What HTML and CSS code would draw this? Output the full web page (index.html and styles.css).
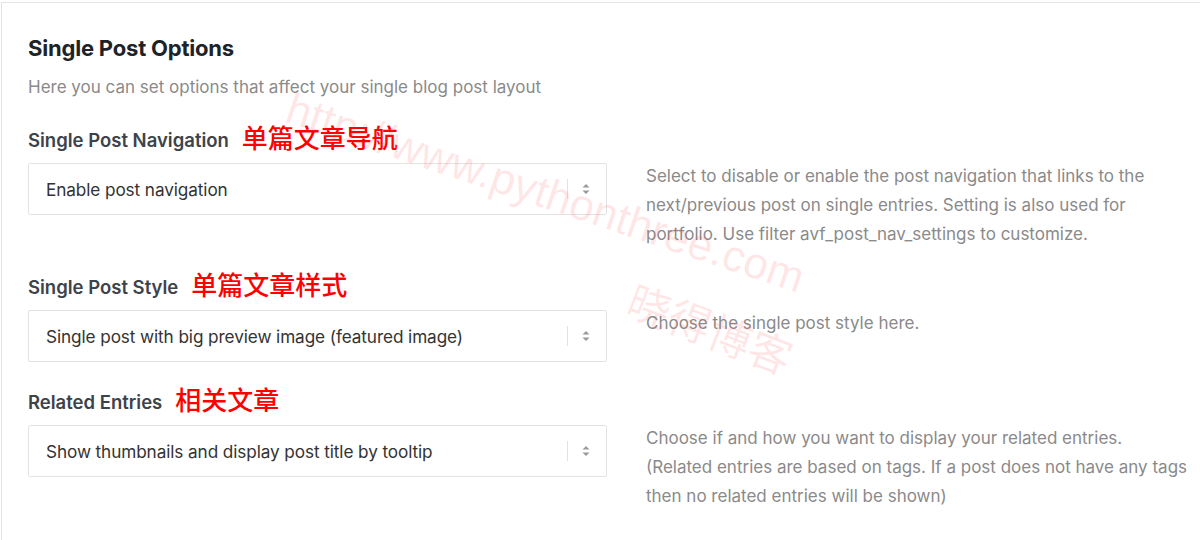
FILE: index.html
```html
<!DOCTYPE html>
<html lang="en">
<head>
<meta charset="utf-8">
<title>Single Post Options</title>
<link rel="stylesheet" href="styles.css">
</head>
<body>
<div class="panel">
  <h2 class="title">Single Post Options</h2>
  <p class="intro">Here you can set options that affect your single blog post layout</p>

  <section class="option">
    <h4 class="label">Single Post Navigation <span class="cn">单篇文章导航</span></h4>
    <div class="row">
      <div class="select">
        <span class="value">Enable post navigation</span>
        <span class="sep"></span>
        <svg class="arrows" width="8" height="12" viewBox="0 0 8 12"><path d="M4 1 L7.5 4.5 H0.5 Z M4 11 L7.5 7.5 H0.5 Z" fill="#9a9a9a"/></svg>
      </div>
      <p class="desc">Select to disable or enable the post navigation that links to the next/previous post on single entries. Setting is also used for portfolio. Use filter avf_post_nav_settings to customize.</p>
    </div>
  </section>

  <section class="option">
    <h4 class="label">Single Post Style <span class="cn">单篇文章样式</span></h4>
    <div class="row">
      <div class="select">
        <span class="value">Single post with big preview image (featured image)</span>
        <span class="sep"></span>
        <svg class="arrows" width="8" height="12" viewBox="0 0 8 12"><path d="M4 1 L7.5 4.5 H0.5 Z M4 11 L7.5 7.5 H0.5 Z" fill="#9a9a9a"/></svg>
      </div>
      <p class="desc">Choose the single post style here.</p>
    </div>
  </section>

  <section class="option">
    <h4 class="label">Related Entries <span class="cn">相关文章</span></h4>
    <div class="row">
      <div class="select">
        <span class="value">Show thumbnails and display post title by tooltip</span>
        <span class="sep"></span>
        <svg class="arrows" width="8" height="12" viewBox="0 0 8 12"><path d="M4 1 L7.5 4.5 H0.5 Z M4 11 L7.5 7.5 H0.5 Z" fill="#9a9a9a"/></svg>
      </div>
      <p class="desc">Choose if and how you want to display your related entries. (Related entries are based on tags. If a post does not have any tags then no related entries will be shown)</p>
    </div>
  </section>

  <div class="watermark wm-url">http://www.pythonthree.com</div>
  <div class="watermark wm-cn">晓得博客</div>
</div>
</body>
</html>
```

FILE: styles.css
```css
html, body {
  margin: 0;
  padding: 0;
  background: #ffffff;
}

body {
  font-family: Inter, "Noto Sans", "Noto Sans CJK SC", sans-serif;
  width: 1200px;
  height: 540px;
  overflow: hidden;
}

.panel {
  position: relative;
  margin: 2px 0 0 1px;
  height: 538px;
  border-top: 1px solid #e4e4e4;
  border-left: 1px solid #e4e4e4;
  padding: 31px 0 0 26px;
  box-sizing: border-box;
}

.title {
  margin: 0;
  font-size: 22px;
  line-height: 28px;
  font-weight: 700;
  color: #1d2327;
  letter-spacing: -0.2px;
}

.intro {
  margin: 13px 0 0;
  font-size: 17px;
  line-height: 24px;
  color: #8a8a8a;
}

.option {
  margin-top: 28px;
}

.option:first-of-type {
  margin-top: 29px;
}

.label {
  margin: 0;
  font-size: 18.5px;
  line-height: 24px;
  font-weight: 600;
  color: #3c434a;
  display: flex;
  align-items: center;
  gap: 13px;
}

.cn {
  font-family: "Noto Sans CJK SC", sans-serif;
  font-weight: 500;
  font-size: 26px;
  line-height: 24px;
  color: #ff0000;
  position: relative;
  top: -3px;
}

.row {
  display: flex;
  align-items: flex-start;
  margin-top: 11px;
}

.select {
  width: 579px;
  height: 52px;
  box-sizing: border-box;
  border: 1px solid #e3e3e3;
  border-radius: 2px;
  display: flex;
  align-items: center;
  padding: 0 0 0 17px;
  flex-shrink: 0;
}

.value {
  flex: 1;
  font-size: 17.2px;
  color: #333;
  letter-spacing: -0.1px;
}

.sep {
  width: 1px;
  height: 20px;
  background: #e2e2e2;
  margin-right: 14px;
}

.arrows {
  margin-right: 16px;
}

.desc {
  margin: -1px 0 -2px 39px;
  width: 544px;
  font-size: 17px;
  line-height: 29px;
  color: #8a8a8a;
}

.watermark {
  position: absolute;
  color: rgba(255, 60, 60, 0.13);
  white-space: nowrap;
  transform-origin: left top;
  pointer-events: none;
}

.wm-url {
  left: 294px;
  top: 80px;
  font-family: "Liberation Sans", Arial, sans-serif;
  font-size: 44px;
  transform: rotate(18.5deg);
}

.wm-cn {
  left: 640px;
  top: 264px;
  font-family: "Noto Sans CJK SC", sans-serif;
  font-size: 43px;
  transform: rotate(21deg);
}
```
